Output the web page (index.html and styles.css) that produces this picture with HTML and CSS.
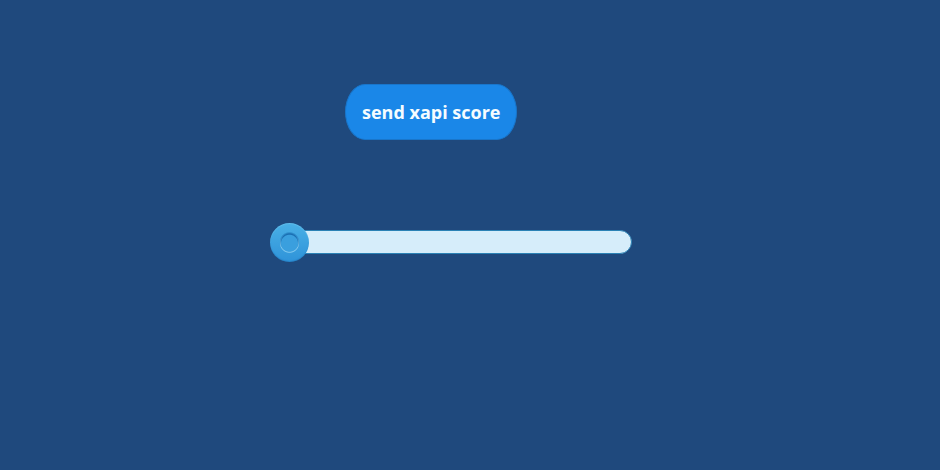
FILE: index.html
```html
<!DOCTYPE html>
<html lang="en">
<head>
<meta charset="utf-8">
<meta name="viewport" content="width=device-width, initial-scale=1">
<title>xAPI score</title>
<link rel="stylesheet" href="styles.css">
</head>
<body>
<main class="stage">
  <button class="send" type="button">send xapi score</button>
  <input class="slider" type="range" min="0" max="100" value="0" aria-label="Score">
</main>
</body>
</html>
```

FILE: styles.css
```css
* {
  box-sizing: border-box;
}

body {
  margin: 0;
  min-height: 100vh;
  background: #1f497d;
  font-family: "Open Sans", "Noto Sans", sans-serif;
}

.stage {
  display: flex;
  flex-direction: column;
  align-items: flex-start;
  gap: 82px;
  padding: 84px 12px 84px 270px;
}

.send {
  height: 56px;
  margin: 0 0 0 75px;
  padding: 0 16px;
  border: 1px solid #1976cb;
  border-radius: 20px / 28px;
  background: #1a87e8;
  color: #f5fcff;
  font: 700 18px/24px "Open Sans", "Noto Sans", sans-serif;
  cursor: pointer;
}

.slider {
  appearance: none;
  width: 55%;
  height: 40px;
  margin: 0;
  background: none;
  cursor: pointer;
}

.slider::-webkit-slider-runnable-track {
  height: 24px;
  margin-left: 16px;
  border: 1px solid #2b82b5;
  border-radius: 12px;
  background: #d6edfa;
}

/* The dimple is a disc with a dark upper rim and a light lower rim. */
.slider::-webkit-slider-thumb {
  appearance: none;
  width: 39px;
  height: 39px;
  margin: -8px 0 0 -17px;
  border: 0;
  border-radius: 50%;
  background:
    radial-gradient(circle at 50% 52%, #3a9fde 8px, transparent 9px),
    radial-gradient(circle at 50% 48%, #1a70b4 8px, transparent 10px),
    radial-gradient(circle at 50% 52%, #82c9f0 9px, transparent 10px),
    linear-gradient(#49b0e6, #2f93d9);
  box-shadow: inset 0 1px 1px #62bdea, inset 0 -1px 1px #2584ca;
}
```
